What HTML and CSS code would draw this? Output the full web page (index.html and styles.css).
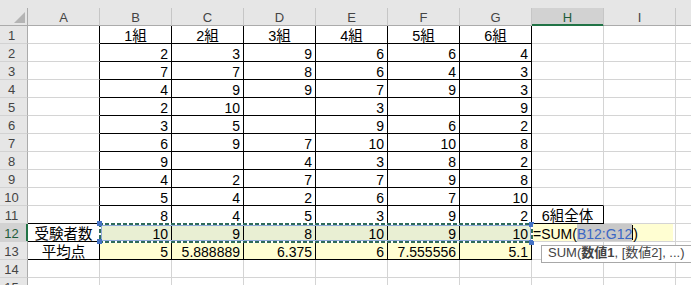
FILE: index.html
```html
<!DOCTYPE html>
<html lang="ja">
<head>
<meta charset="utf-8">
<title>Sheet</title>
<link rel="stylesheet" href="styles.css">
</head>
<body>
<div class="sheet">
  <div class="band"></div>
  <div class="r hdr">
    <div class="corner"><svg width="27" height="17" viewBox="0 0 27 17"><polygon points="25,4 25,15 14,15" fill="#b4b4b4"/></svg></div>
    <div>A</div><div>B</div><div>C</div><div>D</div><div>E</div><div>F</div><div>G</div><div class="sel">H</div><div>I</div><div></div>
  </div>
  <div class="r"><div class="rh">1</div><div class="a"></div><div class="t ctr jp">1組</div><div class="t ctr jp">2組</div><div class="t ctr jp">3組</div><div class="t ctr jp">4組</div><div class="t ctr jp">5組</div><div class="t ctr jp">6組</div><div></div><div></div><div></div></div>
  <div class="r"><div class="rh">2</div><div class="a"></div><div class="t">2</div><div class="t">3</div><div class="t">9</div><div class="t">6</div><div class="t">6</div><div class="t">4</div><div></div><div></div><div></div></div>
  <div class="r"><div class="rh">3</div><div class="a"></div><div class="t">7</div><div class="t">7</div><div class="t">8</div><div class="t">6</div><div class="t">4</div><div class="t">3</div><div></div><div></div><div></div></div>
  <div class="r"><div class="rh">4</div><div class="a"></div><div class="t">4</div><div class="t">9</div><div class="t">9</div><div class="t">7</div><div class="t">9</div><div class="t">3</div><div></div><div></div><div></div></div>
  <div class="r"><div class="rh">5</div><div class="a"></div><div class="t">2</div><div class="t">10</div><div class="t"></div><div class="t">3</div><div class="t"></div><div class="t">9</div><div></div><div></div><div></div></div>
  <div class="r"><div class="rh">6</div><div class="a"></div><div class="t">3</div><div class="t">5</div><div class="t"></div><div class="t">9</div><div class="t">6</div><div class="t">2</div><div></div><div></div><div></div></div>
  <div class="r"><div class="rh">7</div><div class="a"></div><div class="t">6</div><div class="t">9</div><div class="t">7</div><div class="t">10</div><div class="t">10</div><div class="t">8</div><div></div><div></div><div></div></div>
  <div class="r"><div class="rh">8</div><div class="a"></div><div class="t">9</div><div class="t"></div><div class="t">4</div><div class="t">3</div><div class="t">8</div><div class="t">2</div><div></div><div></div><div></div></div>
  <div class="r"><div class="rh">9</div><div class="a"></div><div class="t">4</div><div class="t">2</div><div class="t">7</div><div class="t">7</div><div class="t">9</div><div class="t">8</div><div></div><div></div><div></div></div>
  <div class="r"><div class="rh">10</div><div class="a"></div><div class="t">5</div><div class="t">4</div><div class="t">2</div><div class="t">6</div><div class="t">7</div><div class="t">10</div><div class="hb"></div><div></div><div></div></div>
  <div class="r"><div class="rh">11</div><div class="a ab"></div><div class="t">8</div><div class="t">4</div><div class="t">5</div><div class="t">3</div><div class="t">9</div><div class="t">2</div><div class="bx ctr jp">6組全体</div><div></div><div></div></div>
  <div class="r"><div class="rh rsel">12</div><div class="a ab ctr jp">受験者数</div><div class="t g">10</div><div class="t g">9</div><div class="t g">8</div><div class="t g">10</div><div class="t g">9</div><div class="t g">10</div><div></div><div></div><div></div></div>
  <div class="r"><div class="rh">13</div><div class="a ab ctr jp">平均点</div><div class="t y">5</div><div class="t y">5.888889</div><div class="t y">6.375</div><div class="t y">6</div><div class="t y">7.555556</div><div class="t y">5.1</div><div></div><div></div><div></div></div>
  <div class="r"><div class="rh">14</div><div></div><div></div><div></div><div></div><div></div><div></div><div></div><div></div><div></div><div></div></div>
  <div class="r"><div class="rh">15</div><div></div><div></div><div></div><div></div><div></div><div></div><div></div><div></div><div></div><div></div></div>

  <div class="ants">
    <span class="hd h-tl"></span><span class="hd h-bl"></span><span class="hd h-tr"></span><span class="hd h-br"></span>
  </div>
  <div class="edit"><span>=SUM(</span><span class="ref">B12:G12</span><span class="caret"></span><span>)</span></div>
  <div class="tip">SUM(<b>数値1</b>, [数値2], ...)</div>
</div>
</body>
</html>
```
FILE: styles.css
```css
html, body {
  margin: 0;
  padding: 0;
}
body {
  width: 691px;
  height: 285px;
  overflow: hidden;
  background: #fff;
  font-family: "Liberation Sans", "Noto Sans CJK JP", sans-serif;
  font-size: 14px;
  color: #000;
}
.sheet {
  position: relative;
}
.band {
  height: 8px;
  background: #e6e6e6;
}
.r {
  display: flex;
  height: 18px;
}
.r > div {
  flex: 0 0 72px;
  box-sizing: border-box;
  height: 18px;
  border-right: 1px solid #d4d4d4;
  border-bottom: 1px solid #d4d4d4;
  padding: 4px 3px 0;
  line-height: 13px;
  white-space: nowrap;
  text-align: right;
}
.hdr {
  background: #e6e6e6;
}
.hdr > div {
  border-right-color: #c6c6c6;
  border-bottom-color: #ababab;
  text-align: center;
  font-size: 13px;
  line-height: 12px;
  color: #444;
}
.hdr > .corner {
  flex-basis: 28px;
  padding: 0;
  border-right-color: #ababab;
}
.corner svg {
  display: block;
}
.hdr > .sel {
  background: #d2d2d2;
  border-bottom-color: #217346;
  box-shadow: inset 0 -1px 0 #217346;
  color: #1e5c3b;
}
.r > .rh {
  flex-basis: 28px;
  background: #e6e6e6;
  border-right-color: #ababab;
  border-bottom-color: #d2d2d2;
  text-align: center;
  padding: 4px 4px 0 0;
  font-size: 13px;
  line-height: 12px;
  color: #444;
}
.r > .rsel {
  background: #d2d2d2;
  border-right-color: #217346;
  box-shadow: inset -1px 0 0 #217346;
  color: #1e5c3b;
}
.r > .a {
  border-right-color: #000;
}
.r > .ab {
  border-bottom-color: #000;
}
.r > .t {
  border-right-color: #000;
  border-bottom-color: #000;
}
.r > .hb {
  border-bottom-color: #000;
}
.r > .bx {
  border-right-color: #000;
  border-bottom-color: #000;
}
.r > .ctr {
  text-align: center;
}
.jp {
  font-size: 14.5px;
}
.g {
  background: #e9efd3;
}
.y {
  background: #fffed2;
}

/* marching-ants range B12:G12 */
.ants {
  position: absolute;
  left: 99px;
  top: 223px;
  width: 434px;
  height: 20px;
  box-sizing: border-box;
  background:
    repeating-linear-gradient(90deg, #2e6b5a 0 4px, #ffffff 4px 6px) left top / 100% 2px no-repeat,
    repeating-linear-gradient(90deg, #2e6b5a 0 4px, #ffffff 4px 6px) left bottom / 100% 2px no-repeat,
    repeating-linear-gradient(180deg, #2e6b5a 0 4px, #ffffff 4px 6px) left top / 2px 100% no-repeat,
    repeating-linear-gradient(180deg, #2e6b5a 0 4px, #ffffff 4px 6px) right top / 2px 100% no-repeat;
}
.ants::before {
  content: "";
  position: absolute;
  left: 2px;
  top: 2px;
  right: 2px;
  bottom: 2px;
  border: 1px solid #8fa9d8;
}
.hd {
  position: absolute;
  width: 5px;
  height: 5px;
  background: #4472c4;
}
.h-tl { left: -2px; top: -2px; }
.h-bl { left: -2px; top: 16px; }
.h-tr { left: 430px; top: -1px; }
.h-br { left: 430px; top: 17px; }

/* in-cell editor H12 */
.edit {
  position: absolute;
  left: 533px;
  top: 224px;
  width: 140px;
  height: 17px;
  background: #fffed2;
  display: flex;
  font-size: 14px;
  line-height: 13px;
  white-space: nowrap;
}
.edit > span {
  padding-top: 4px;
}
.edit > .ref {
  background: #c8c8c8;
  color: #3a66c4;
}
.edit > .caret {
  width: 1px;
  padding: 0;
  margin: 1px 0;
  background: #000;
}

/* function tooltip */
.tip {
  position: absolute;
  left: 541px;
  top: 245px;
  width: 170px;
  height: 18px;
  box-sizing: border-box;
  border: 1px solid #a8a8a8;
  background: #fff;
  color: #444;
  font-size: 13px;
  line-height: 13px;
  padding: 0 0 0 6px;
  white-space: nowrap;
}
.tip b {
  font-weight: bold;
}
```
